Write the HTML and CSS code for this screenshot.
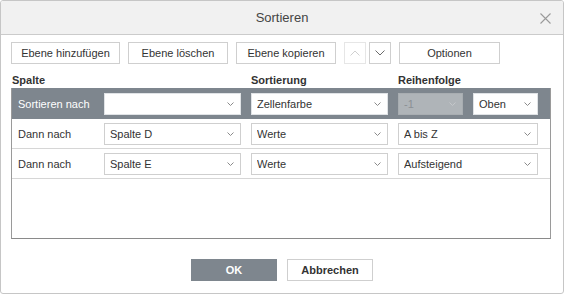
FILE: index.html
```html
<!DOCTYPE html>
<html lang="de">
<head>
<meta charset="utf-8">
<title>Sortieren</title>
<link rel="stylesheet" href="styles.css">
</head>
<body>
<div class="dialog">
  <div class="header">
    <span class="title">Sortieren</span>
    <svg class="close" width="11" height="11" viewBox="0 0 11 11"><path d="M0.5 0.5L10.5 10.5M10.5 0.5L0.5 10.5" stroke="#9a9a9a" stroke-width="1.1" fill="none"/></svg>
  </div>
  <div class="body">
    <div class="toolbar">
      <button class="btn b1">Ebene hinzufügen</button>
      <button class="btn b2">Ebene löschen</button>
      <button class="btn b3">Ebene kopieren</button>
      <button class="btn arrow disabled"><svg width="10" height="6" viewBox="0 0 10 6"><path d="M0.5 5.5L5 1L9.5 5.5" stroke="#d0d0d0" fill="none"/></svg></button>
      <button class="btn arrow down"><svg width="10" height="6" viewBox="0 0 10 6"><path d="M0.5 0.5L5 5L9.5 0.5" stroke="#6a6a6a" fill="none"/></svg></button>
      <button class="btn opt">Optionen</button>
    </div>
    <div class="labels">
      <span class="lab span2">Spalte</span>
      <span class="lab">Sortierung</span>
      <span class="lab">Reihenfolge</span>
    </div>
    <div class="table">
      <div class="row head">
        <span class="rl">Sortieren nach</span>
        <div class="sel"><span class="val"></span><svg width="7" height="4" viewBox="0 0 7 4"><path d="M0.5 0.5L3.5 3.5L6.5 0.5" stroke="#8a8a8a" fill="none"/></svg></div>
        <div class="sel"><span class="val">Zellenfarbe</span><svg width="7" height="4" viewBox="0 0 7 4"><path d="M0.5 0.5L3.5 3.5L6.5 0.5" stroke="#8a8a8a" fill="none"/></svg></div>
        <div class="pair">
          <div class="sel dis"><span class="val">-1</span><svg width="7" height="4" viewBox="0 0 7 4"><path d="M0.5 0.5L3.5 3.5L6.5 0.5" stroke="#c4c7ca" fill="none"/></svg></div>
          <div class="sel"><span class="val">Oben</span><svg width="7" height="4" viewBox="0 0 7 4"><path d="M0.5 0.5L3.5 3.5L6.5 0.5" stroke="#8a8a8a" fill="none"/></svg></div>
        </div>
      </div>
      <div class="row">
        <span class="rl">Dann nach</span>
        <div class="sel"><span class="val">Spalte D</span><svg width="7" height="4" viewBox="0 0 7 4"><path d="M0.5 0.5L3.5 3.5L6.5 0.5" stroke="#8a8a8a" fill="none"/></svg></div>
        <div class="sel"><span class="val">Werte</span><svg width="7" height="4" viewBox="0 0 7 4"><path d="M0.5 0.5L3.5 3.5L6.5 0.5" stroke="#8a8a8a" fill="none"/></svg></div>
        <div class="sel"><span class="val">A bis Z</span><svg width="7" height="4" viewBox="0 0 7 4"><path d="M0.5 0.5L3.5 3.5L6.5 0.5" stroke="#8a8a8a" fill="none"/></svg></div>
      </div>
      <div class="row">
        <span class="rl">Dann nach</span>
        <div class="sel"><span class="val">Spalte E</span><svg width="7" height="4" viewBox="0 0 7 4"><path d="M0.5 0.5L3.5 3.5L6.5 0.5" stroke="#8a8a8a" fill="none"/></svg></div>
        <div class="sel"><span class="val">Werte</span><svg width="7" height="4" viewBox="0 0 7 4"><path d="M0.5 0.5L3.5 3.5L6.5 0.5" stroke="#8a8a8a" fill="none"/></svg></div>
        <div class="sel"><span class="val">Aufsteigend</span><svg width="7" height="4" viewBox="0 0 7 4"><path d="M0.5 0.5L3.5 3.5L6.5 0.5" stroke="#8a8a8a" fill="none"/></svg></div>
      </div>
    </div>
    <div class="footer">
      <button class="fbtn ok">OK</button>
      <button class="fbtn cancel">Abbrechen</button>
    </div>
  </div>
</div>
</body>
</html>
```
FILE: styles.css
```css
* { box-sizing: border-box; }
html, body { margin: 0; padding: 0; background: #fff; }
body {
  font-family: "Liberation Sans", Arial, sans-serif;
  font-size: 11px;
  color: #333;
}
.dialog {
  width: 564px;
  height: 294px;
  border: 1px solid #c6c6c6;
  border-radius: 3px;
  overflow: hidden;
  background: #fff;
}
.header {
  height: 34px;
  background: #f1f1f1;
  border-bottom: 1px solid #cbcbcb;
  display: flex;
  align-items: center;
  justify-content: center;
  position: relative;
}
.title {
  font-size: 13px;
  color: #444;
  line-height: 16px;
  margin-top: 1px;
}
.close {
  position: absolute;
  right: 12px;
  top: 12px;
}
.body {
  padding: 7px 12px 0 10px;
}
.toolbar {
  display: flex;
  height: 22px;
}
.btn {
  font-family: inherit;
  font-size: 11px;
  color: #333;
  background: #fff;
  border: 1px solid #cfcfcf;
  height: 22px;
  padding: 0;
  margin: 0 8px 0 0;
  display: flex;
  align-items: center;
  justify-content: center;
}
.b1 { width: 109px; }
.b2 { width: 100px; }
.b3 { width: 100px; }
.arrow { width: 22px; }
.arrow.disabled { border-color: #e6e6e6; margin-right: 3px; }
.opt { width: 101px; margin-right: 0; }
.labels {
  display: grid;
  grid-template-columns: 82px 137px 137px 140px;
  column-gap: 10px;
  margin-top: 9px;
  height: 15px;
  padding-left: 1px;
}
.lab {
  font-weight: bold;
  color: #333;
  line-height: 14px;
}
.span2 { grid-column: span 2; }
.table {
  border: 1px solid #9a9a9a;
  border-top: none;
  border-bottom-color: #8a8a8a;
  height: 151px;
}
.row {
  display: grid;
  grid-template-columns: 82px 137px 137px 140px;
  column-gap: 10px;
  align-items: center;
  height: 30px;
  border-bottom: 1px solid #d6d6d6;
}
.row.head {
  background: #7e868e;
  height: 31px;
  border-bottom: none;
  color: #fff;
}
.rl {
  padding-left: 6px;
  white-space: nowrap;
}
.head .rl { color: #fff; }
.sel {
  height: 22px;
  border: 1px solid #cfcfcf;
  background: #fff;
  display: flex;
  align-items: center;
  padding: 0 6px 0 5px;
  color: #333;
}
.head .sel { border-color: #e0e3e6; }
.sel .val { flex: 1; white-space: nowrap; overflow: hidden; }
.sel svg { flex: none; margin-top: 1px; }
.sel.dis {
  background: #afb4b8;
  border-color: #a8adb1;
  color: #8b9095;
}
.pair {
  display: grid;
  grid-template-columns: 65px 65px;
  column-gap: 10px;
}
.footer {
  display: flex;
  justify-content: center;
  column-gap: 10px;
  margin-top: 20px;
  padding-left: 2px;
}
.fbtn {
  font-family: inherit;
  font-size: 11px;
  font-weight: bold;
  width: 86px;
  height: 22px;
  padding: 0;
  margin: 0;
  border: 1px solid #cfcfcf;
  background: #fff;
  color: #333;
}
.fbtn.ok {
  background: #7e868e;
  border-color: #7e868e;
  color: #fff;
}
```
